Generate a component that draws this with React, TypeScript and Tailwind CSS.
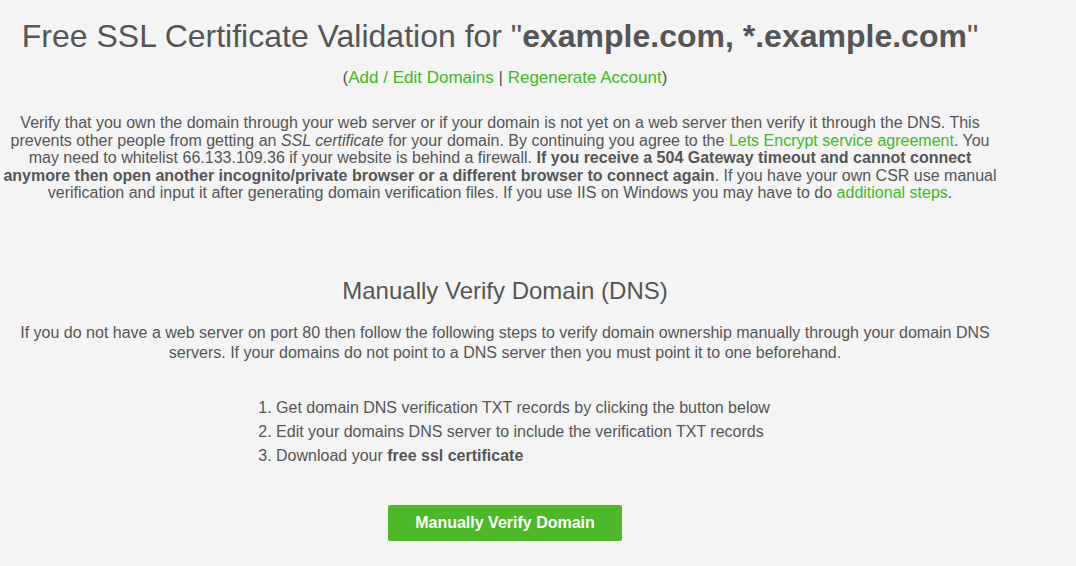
export default function App() {
  const link = "text-[#41b923] hover:underline";

  return (
    <div className="min-h-[566px] w-full bg-[#f4f4f4] font-['Liberation_Sans',Arial,sans-serif] text-[#555555]">
      <div className="w-[1010px] pt-[16px] text-center">
        <h1 className="pr-[10px] text-[32px] leading-[40px] font-normal">
          Free SSL Certificate Validation for "<b className="font-bold">example.com, *.example.com</b>"
        </h1>

        <p className="mt-[12px] text-[17px] leading-[20px]">
          (<a href="#" className={link}>Add / Edit Domains</a> |{" "}
          <a href="#" className={link}>Regenerate Account</a>)
        </p>

        <p className="mt-[26px] w-[1000px] text-[16px] leading-[17.5px]">
          Verify that you own the domain through your web server or if your domain is not yet on a web server
          then verify it through the DNS. This prevents other people from getting an <i>SSL certificate</i> for
          your domain. By continuing you agree to the{" "}
          <a href="#" className={link}>Lets Encrypt service agreement</a>. You may need to whitelist
          66.133.109.36 if your website is behind a firewall.{" "}
          <b>
            If you receive a 504 Gateway timeout and cannot connect anymore then open another
            incognito/private browser or a different browser to connect again
          </b>
          . If you have your own CSR use manual verification and input it after generating domain
          verification files. If you use IIS on Windows you may have to do{" "}
          <a href="#" className={link}>additional steps</a>.
        </p>

        <h2 className="mt-[74px] text-[24px] leading-[30px] font-normal">Manually Verify Domain (DNS)</h2>

        <p className="mt-[17px] px-[10px] text-[16px] leading-[20px]">
          If you do not have a web server on port 80 then follow the following steps to verify domain
          ownership manually through your domain DNS servers. If your domains do not point to a DNS server
          then you must point it to one beforehand.
        </p>

        <div className="mt-[33px] flex justify-center">
          <ol className="ml-[18px] list-decimal pl-[18px] text-left text-[16px] leading-[24px]">
            <li>Get domain DNS verification TXT records by clicking the button below</li>
            <li>Edit your domains DNS server to include the verification TXT records</li>
            <li>
              Download your <b>free ssl certificate</b>
            </li>
          </ol>
        </div>

        <div className="mt-[37px] flex justify-center">
          <button className="h-[36px] w-[234px] rounded-[2px] bg-[#4cb82a] text-[16px] font-bold text-white">
            Manually Verify Domain
          </button>
        </div>
      </div>
    </div>
  );
}
